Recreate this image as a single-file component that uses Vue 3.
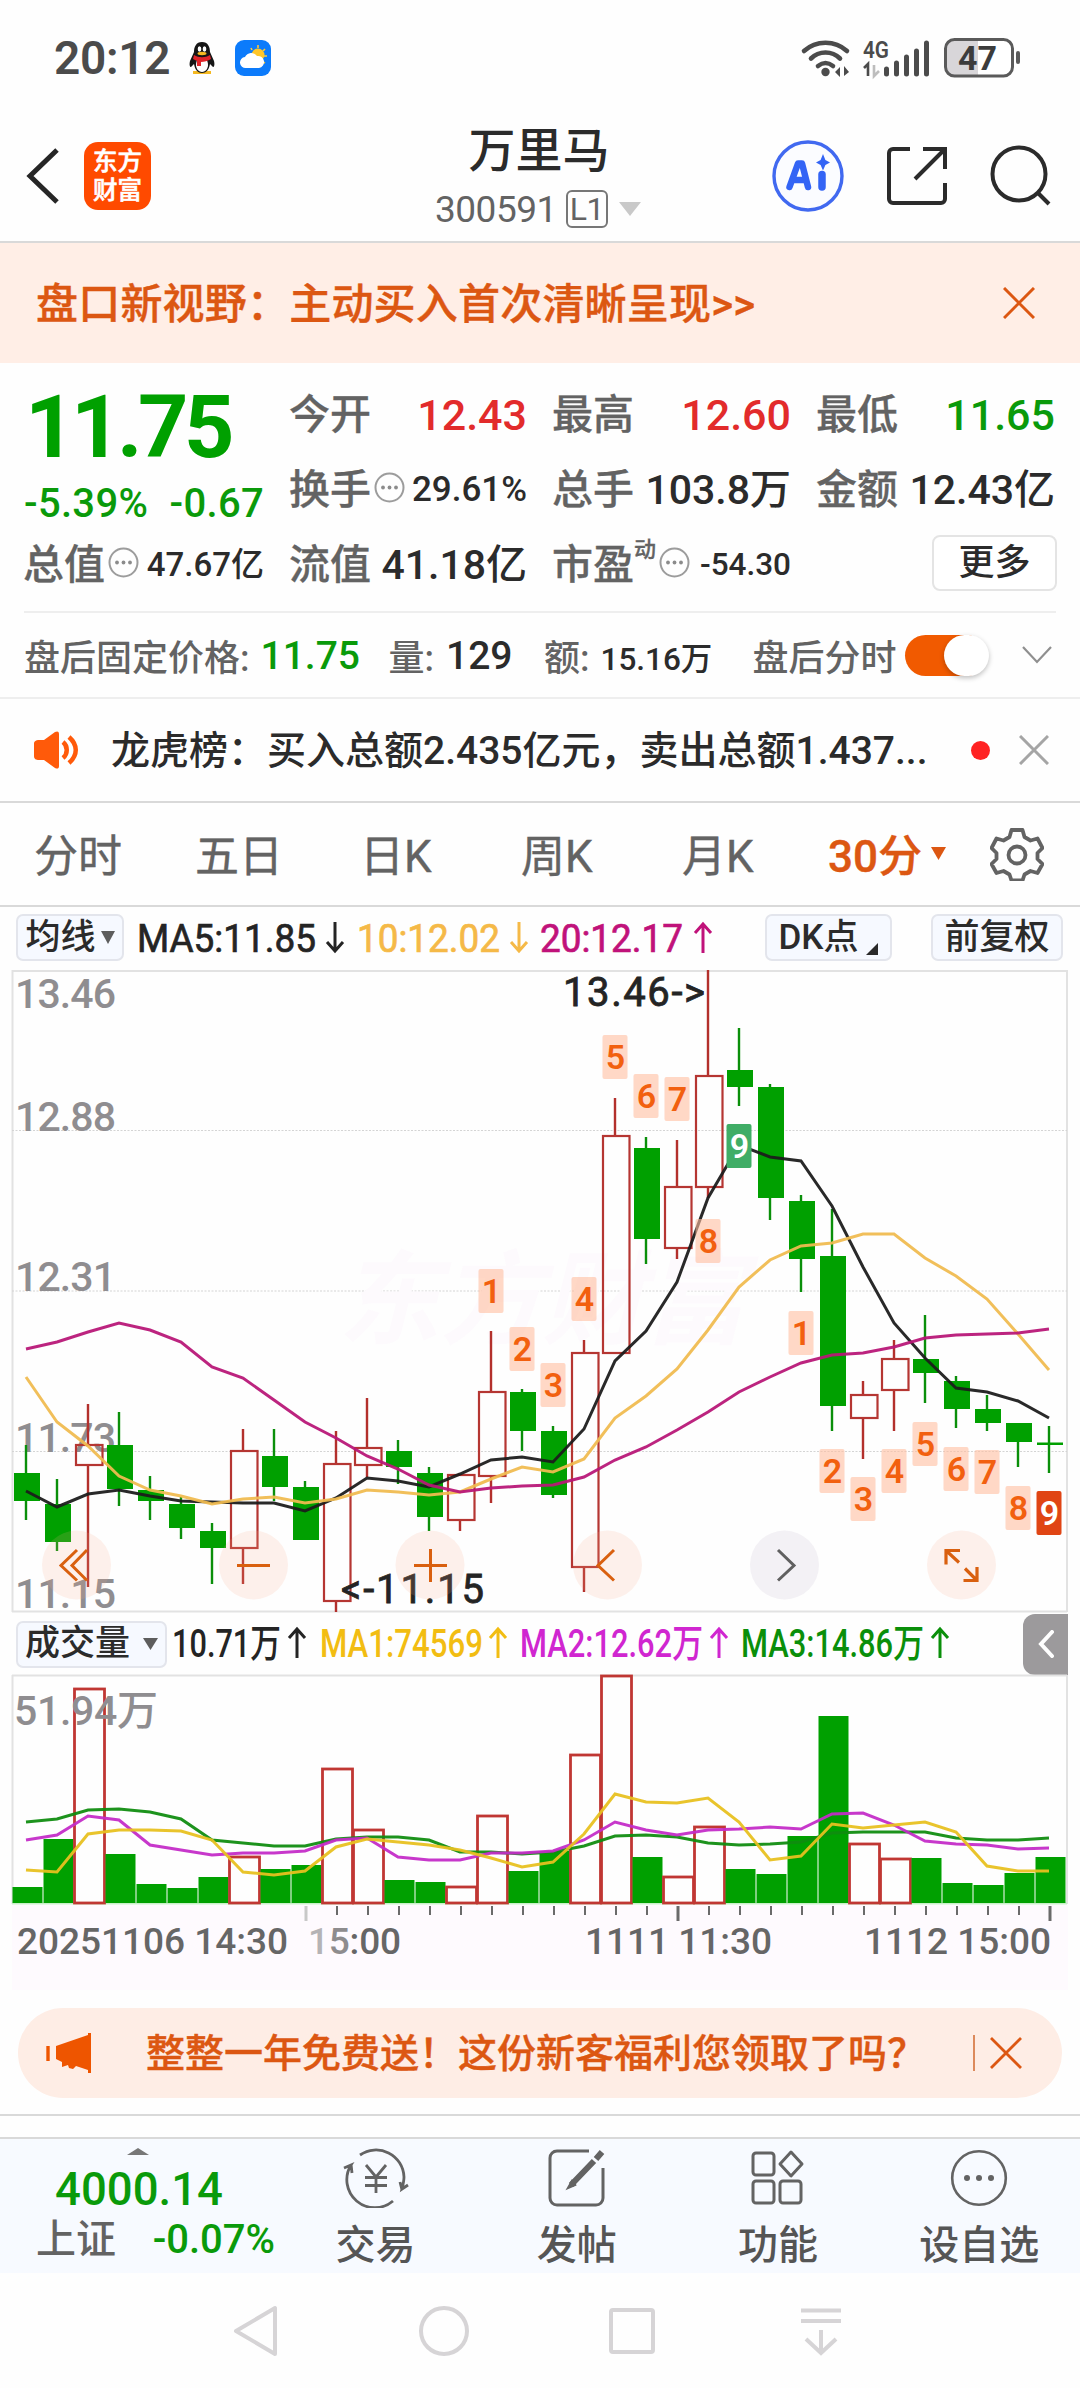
<template>
  <div class="page">
    <!-- 系统状态栏 -->
    <div class="status">
      <span class="status__time">20:12</span>
      <svg class="status__qq" width="28" height="34" viewBox="0 0 28 34">
        <path d="M5 30h18v3H5z" fill="#f5b921" />
        <path d="M14 1c-6 0-8 5-8 10l-4 9c-1 4 0 6 1 6l3-3c1 6 4 9 8 9s7-3 8-9l3 3c1 0 2-2 1-6l-4-9c0-5-2-10-8-10z" fill="#161616" />
        <path d="M14 17c-5 0-6 4-6 7s2 7 6 7 6-4 6-7-1-7-6-7z" fill="#fff" />
        <path d="M6 14c5 3 11 3 16 0l1 4c-3 2-7 3-10 3v4H9v-5l-4-2z" fill="#e0242a" />
        <ellipse cx="11.5" cy="8" rx="1.8" ry="2.8" fill="#fff" />
        <ellipse cx="16.5" cy="8" rx="1.8" ry="2.8" fill="#fff" />
        <ellipse cx="14" cy="12.5" rx="4.5" ry="1.7" fill="#f5b921" />
      </svg>
      <svg class="status__weather" width="36" height="36" viewBox="0 0 36 36">
        <rect width="36" height="36" rx="9" fill="#0c7bfb" />
        <path d="M23 5v3M30 9l-2 2M32 16h-3M16 8l1 2M30 23l-2-1" stroke="#ffc933" stroke-width="1.6" />
        <circle cx="23" cy="15" r="6.5" fill="#ffc628" />
        <path d="M11 28a5.500 5.500 0 0 1-1-11 7 7 0 0 1 12-1 6 6 0 0 1 2 12z" fill="#fff" />
      </svg>
      <svg class="status__right" width="222" height="44" viewBox="800 35 222 44">
        <g fill="none" stroke="#4b4b4b" stroke-width="4.600" stroke-linecap="round">
          <path d="M804 50c12-11 31-11 43 0" />
          <path d="M811 57.500c8-8 21-8 29 0" />
          <path d="M818 65c5-4 10-4 15 0" />
        </g>
        <circle cx="825.500" cy="71" r="4.200" fill="#4b4b4b" />
        <path d="M835 71l5-5v10zM849 71l-5-6v10z" fill="#4b4b4b" />
        <text x="863" y="57" textLength="26" lengthAdjust="spacingAndGlyphs" font-size="24" font-weight="600" fill="#4b4b4b">4G</text>
        <path d="M864 67l4-4v12" stroke="#4b4b4b" stroke-width="2.600" fill="none" />
        <path d="M874 64v11l5-5" stroke="#bdbdbd" stroke-width="2.600" fill="none" />
        <path d="M886.500 68v5M896.500 62v11M906.500 56v17M916.500 50v23M926.500 42v31" stroke="#4b4b4b" stroke-width="5" stroke-linecap="round" />
        <rect x="945.500" y="38.500" width="67" height="36.500" rx="9" fill="#fff" />
        <path d="M954.500 39H978v36h-23.500a9 9 0 0 1-9-9V48a9 9 0 0 1 9-9z" fill="#d8d6d9" />
        <rect x="945.500" y="38.500" width="67" height="36.500" rx="9" fill="none" stroke="#5a5a5a" stroke-width="3" />
        <path d="M1018 52v9" stroke="#5a5a5a" stroke-width="4" stroke-linecap="round" />
        <text x="958" y="68.500" textLength="39" lengthAdjust="spacingAndGlyphs" font-size="34" font-weight="700" fill="#3c3c3c">47</text>
      </svg>
    </div>

    <!-- 顶部导航 -->
    <header class="header">
      <div class="header__side">
        <svg width="34" height="56" viewBox="0 0 34 56"><path d="M31 2L4 28l27 26" fill="none" stroke="#262626" stroke-width="5" /></svg>
        <div class="logo"><span>东方</span><span>财富</span></div>
      </div>
      <div class="header__center">
        <div class="header__name">万里马</div>
        <div class="header__code">
          <span>300591</span><span class="level">L1</span>
          <svg width="22" height="14" viewBox="0 0 22 14"><path d="M0 0h22L11 14z" fill="#c9c9c9" /></svg>
        </div>
      </div>
      <div class="header__side header__side--right">
        <svg width="72" height="72" viewBox="0 0 72 72">
          <circle cx="36" cy="36" r="34" fill="#fbfcff" stroke="#4169f0" stroke-width="3.400" />
          <path d="M17.500 47L26 23.500h4L36 47M21 40h13" fill="none" stroke="#3364f5" stroke-width="6.500" stroke-linecap="round" stroke-linejoin="round" />
          <path d="M50 34.500V47" stroke="#3364f5" stroke-width="7.500" stroke-linecap="round" />
          <path d="M51 14l2.400 6 4.600 2.500-4.600 2.500-2.400 5.500-2.400-5.500-4.600-2.500 4.600-2.500z" fill="#3364f5" />
        </svg>
        <svg width="60" height="60" viewBox="0 0 60 60" fill="none" stroke="#2b2b2b" stroke-width="4">
          <path d="M23 3H6a4 4 0 0 0-4 4v46a4 4 0 0 0 4 4h48a4 4 0 0 0 4-4V37" />
          <path d="M36 3h22v20M57 4L28 33" />
        </svg>
        <svg width="62" height="62" viewBox="0 0 62 62" fill="none" stroke="#2b2b2b" stroke-width="4">
          <circle cx="29" cy="29" r="26.500" /><path d="M48 48l11 11" />
        </svg>
      </div>
    </header>

    <div class="banner">
      <span class="banner__text">盘口新视野：主动买入首次清晰呈现&gt;&gt;</span>
      <svg width="32" height="32" viewBox="0 0 32 32"><path d="M1 1l30 30M31 1L1 31" stroke="#dc5712" stroke-width="3" /></svg>
    </div>

    <!-- 行情 -->
    <section class="quote">
      <div class="price">
        <div class="price__now">11.75</div>
        <div class="price__diff"><span>-5.39%</span><span>-0.67</span></div>
      </div>
      <div v-for="q in quotes" :key="q.label" class="cell">
        <span class="cell__label">{{ q.label }}<sup v-if="q.sup">{{ q.sup }}</sup></span>
        <svg v-if="q.tip" class="cell__tip" width="31" height="31" viewBox="0 0 31 31">
          <circle cx="15.500" cy="15.500" r="14" fill="none" stroke="#9c9c9c" stroke-width="2" />
          <circle cx="9" cy="15.500" r="1.900" fill="#8b8b8b" /><circle cx="15.500" cy="15.500" r="1.900" fill="#8b8b8b" /><circle cx="22" cy="15.500" r="1.900" fill="#8b8b8b" />
        </svg>
        <span class="cell__value" :class="[q.color, q.size]">{{ q.value }}</span>
      </div>
      <div class="cell cell--more"><button class="more">更多</button></div>
    </section>

    <div class="after">
      <span class="after__label">盘后固定价格:</span><b class="green after__price">11.75</b>
      <span class="after__label">量:</span><b class="after__num">129</b>
      <span class="after__label">额:</span><b class="after__small">15.16万</b>
      <span class="after__label">盘后分时</span>
      <span class="switch"><i></i></span>
      <svg class="after__arrow" width="30" height="18" viewBox="0 0 30 18"><path d="M1 1l14 15L29 1" fill="none" stroke="#8f8f8f" stroke-width="2.200" /></svg>
    </div>

    <div class="news">
      <svg width="46" height="38" viewBox="0 0 46 38">
        <path d="M1 13c0-3 2-4 5-4h5L22 1c2-1 4-1 4 2v32c0 3-2 3-4 2l-11-8H6c-3 0-5-1-5-4z" fill="#ff5a0a" />
        <path d="M30 11c5 4 5 12 0 16M36 6c9 8 9 18 0 26" fill="none" stroke="#ff5a0a" stroke-width="4.500" />
      </svg>
      <span class="news__text">龙虎榜：买入总额2.435亿元，卖出总额1.437...</span>
      <i class="news__dot"></i>
      <svg width="30" height="30" viewBox="0 0 30 30"><path d="M1 1l28 28M29 1L1 29" stroke="#a5a5a5" stroke-width="3" /></svg>
    </div>

    <nav class="tabs">
      <span v-for="t in tabs" :key="t" class="tabs__item">{{ t }}</span>
      <span class="tabs__item tabs__item--active">30分<svg width="15" height="13" viewBox="0 0 15 13"><path d="M0 0h15L7.500 13z" fill="#dc5712" /></svg></span>
      <svg class="tabs__gear" width="54" height="54" viewBox="0 0 54 54" fill="none" stroke="#636363" stroke-width="3.800" stroke-linejoin="round">
        <path d="M21.500 3h11l2 7 6 3.500 7-2 5 9.500-5 5v6l5 5-5 9-7-2-6 3.500-2 6h-11l-2-6-6-3.500-7 2-5-9 5-5v-6l-5-5 5-9.500 7 2 6-3.500z" />
        <circle cx="27" cy="28" r="8.500" />
      </svg>
    </nav>

    <!-- K线 -->
    <div class="legend">
      <button class="chip chip--avg">均线<svg width="14" height="13" viewBox="0 0 14 13"><path d="M0 0h14L7 13z" fill="#5d5d5d" /></svg></button>
      <svg class="legend__values" width="600" height="50" viewBox="130 0 600 50">
        <g v-for="m in maLegend" :key="m.text" :fill="m.color" :stroke="m.color">
          <text :x="m.x" y="39" :textLength="m.w" lengthAdjust="spacingAndGlyphs" font-size="38" stroke-width="0.7">{{ m.text }}</text>
          <path :d="arrow(m.ax, 9, m.up)" fill="none" stroke-width="3" />
        </g>
      </svg>
      <button class="chip chip--dk">DK点<svg width="12" height="12" viewBox="0 0 12 12"><path d="M12 0v12H0z" fill="#2a2a2a" /></svg></button>
      <button class="chip chip--right">前复权</button>
    </div>

    <svg class="chart" width="1080" height="646" viewBox="0 968 1080 646">
      <path d="M12 971H1067M12 1611.500H1067M12.500 970V1612M1067 970V1612" stroke="#e2e2e2" stroke-width="2" fill="none" />
      <path d="M12 1130.500H1067M12 1291H1067M12 1451.500H1067" stroke="#d4d4d4" stroke-width="1" stroke-dasharray="2 1.500" />
      <text class="watermark" x="338" y="1336" textLength="408">东方财富</text>
      <g class="axis">
        <text v-for="l in priceAxis" :key="l[0]" x="15" :y="l[1]" textLength="101">{{ l[0] }}</text>
      </g>
      <g v-for="(c, i) in candles" :key="i">
        <template v-if="c[4]">
          <path :d="`M${cx(i)} ${c[0]}V${c[1]}M${cx(i)} ${c[2]}V${c[3]}`" stroke="#b3302c" stroke-width="2.400" />
          <rect :x="cx(i) - 12" :y="c[1] + 1" width="26.500" :height="c[2] - c[1]" fill="none" stroke="#b53632" stroke-width="2.200" />
        </template>
        <template v-else>
          <path :d="`M${cx(i)} ${c[0]}V${c[3]}`" stroke="#0a8f0a" stroke-width="2.400" />
          <rect :x="cx(i) - 12" :y="c[1]" width="26" :height="c[2] - c[1]" fill="#00a000" />
        </template>
      </g>
      <polyline v-for="l in priceLines" :key="l.color" :points="points(l.ys)" fill="none" :stroke="l.color" stroke-width="3" stroke-opacity=".94" />
      <g v-for="b in badges" :key="b[0] + '-' + b[1]">
        <rect :x="cx(b[0]) - 12.500" :y="b[2]" width="25" height="44" rx="2" :fill="badgeFill(b[3])" />
        <text :x="cx(b[0]) + 0.500" :y="b[2] + 34" class="badge" :fill="b[3] ? '#fff' : '#f2600f'">{{ b[1] }}</text>
      </g>
      <text x="563" y="1006" textLength="142" class="mark">13.46-&gt;</text>
      <text x="341" y="1603" textLength="143" class="mark">&lt;-11.15</text>
      <g fill="#f7a88a" fill-opacity=".16">
        <circle v-for="x in [76.5, 253.5, 430, 607.5, 961.5]" :key="x" :cx="x" cy="1565" r="34.500" />
        <circle cx="784.500" cy="1565" r="34.500" fill="#d8cfe0" fill-opacity=".28" />
      </g>
      <g fill="none" stroke="#d9600f" stroke-width="3">
        <path d="M77 1550l-16 15.500 16 15M87 1550l-15 15.500 15 15M237 1565.500h33M414 1565.500h33M430.500 1549v33M614 1550l-16 15.500 16 15" />
        <path d="M778 1550l16 15.500-16 15" stroke="#606060" />
        <path d="M960 1550.500h-14v14M946 1550.500l13 12M963.500 1580.500H977V1567M977 1580.500l-12-12" stroke-width="3.200" />
      </g>
    </svg>

    <!-- 成交量 -->
    <div class="legend legend--vol">
      <button class="chip chip--vol">成交量<svg width="15" height="12" viewBox="0 0 15 12"><path d="M0 0h15L7.500 12z" fill="#5d5d5d" /></svg></button>
      <svg class="legend__values" width="800" height="50" viewBox="170 0 800 50">
        <g v-for="m in volLegend" :key="m.text" :fill="m.color" :stroke="m.color">
          <text :x="m.x" y="38" :textLength="m.w" lengthAdjust="spacingAndGlyphs" font-size="39" stroke="none">{{ m.text }}</text>
          <path :d="arrow(m.ax, 8, m.up)" fill="none" stroke-width="3" />
        </g>
      </svg>
      <button class="fold"><svg width="16" height="28" viewBox="0 0 16 28"><path d="M14 2L3 14l11 12" fill="none" stroke="#fff" stroke-width="4" stroke-linecap="round" /></svg></button>
    </div>

    <svg class="chart" width="1080" height="318" viewBox="0 1674 1080 318">
      <rect x="12" y="1905" width="1056" height="85" fill="#fefafe" />
      <path d="M12 1675.500H1067M12.500 1675V1904M1067 1675V1904" stroke="#e2e2e2" stroke-width="2" fill="none" />
      <path d="M12 1903.500H1067" stroke="#c9f0c9" stroke-width="2" />
      <g v-for="(v, i) in volumes" :key="i">
        <rect v-if="candles[i][4]" :x="74.500 + 31 * (i - 2)" :y="v + 1" width="30" :height="1902 - v" fill="none" stroke="#c03733" stroke-width="2.800" />
        <rect v-else :x="12.500 + 31 * i" :y="v" width="30" :height="1903 - v" fill="#00a000" />
      </g>
      <polyline v-for="l in volLines" :key="l.color" :points="points(l.ys)" fill="none" :stroke="l.color" stroke-width="3" stroke-opacity=".94" />
      <text x="14" y="1725" textLength="144" class="axis">51.94万</text>
      <path v-for="i in 25" :key="i" :d="`M${cx(i + 8) + 1} 1906v${isMajor(i + 8) ? 15 : 9}`" :stroke="i === 1 ? '#c8c8c8' : '#6a6a6a'" :stroke-width="isMajor(i + 8) ? 3 : 2" />
      <g class="dates">
        <text x="17" y="1954" textLength="271">20251106 14:30</text>
        <text x="308" y="1954" textLength="93"><tspan fill="#b5b3b5">1</tspan><tspan fill="#8e8c8e">5</tspan>:00</text>
        <text x="585" y="1954" textLength="187">1111 11:30</text>
        <text x="864" y="1954" textLength="187">1112 15:00</text>
      </g>
    </svg>

    <div class="promo">
      <svg width="48" height="42" viewBox="0 0 48 42">
        <path d="M2 14v15" stroke="#ee5500" stroke-width="3.400" />
        <path d="M10 14L42 3V1h3v40h-3v-3l-12-4-3 3-4-1-1-3-6 2v-5l-6-3z" fill="#ee5500" />
      </svg>
      <span class="promo__text">整整一年免费送！这份新客福利您领取了吗？</span>
      <i class="promo__line"></i>
      <svg width="32" height="32" viewBox="0 0 32 32"><path d="M1 1l30 30M31 1L1 31" stroke="#dc5712" stroke-width="2.800" /></svg>
    </div>
    <div class="gap"></div>

    <!-- 底部工具栏 -->
    <footer class="toolbar">
      <div class="index">
        <svg width="22" height="7" viewBox="0 0 22 7"><path d="M0 7h22L11 0z" fill="#777" /></svg>
        <div class="index__value">4000.14</div>
        <div class="index__row"><span>上证</span><b>-0.07%</b></div>
      </div>
      <div class="tool">
        <svg width="66" height="60" viewBox="0 0 66 60" fill="none" stroke="#636363" stroke-width="2.800">
          <path d="M17 7a28 28 0 0 1 44 22c0 4-1 8-2 12l6-4M59 42l-2-8" />
          <path d="M50 53A28 28 0 0 1 8 17L1 20M8 16l1 9" />
          <path d="M23 17l10 12 10-12M22 29.500h22M22 37.500h22M33 29v16" />
        </svg>
        <span>交易</span>
      </div>
      <div class="tool">
        <svg width="58" height="60" viewBox="0 0 58 60" fill="none" stroke="#636363" stroke-width="3">
          <path d="M41 3H9a7 7 0 0 0-7 7v40a7 7 0 0 0 7 7h39a7 7 0 0 0 7-7V20" />
          <path d="M54 4L48 11M46 13L23 37" stroke-width="6" />
          <path d="M25 32l-4 7 7-3" stroke-width="3" />
        </svg>
        <span>发帖</span>
      </div>
      <div class="tool">
        <svg width="56" height="60" viewBox="0 0 56 60" fill="none" stroke="#636363" stroke-width="3">
          <rect x="3" y="5" width="21" height="22" rx="3" /><path d="M41 4l11 12-11 12-11-12z" stroke-linejoin="round" />
          <rect x="3" y="33" width="21" height="22" rx="3" /><rect x="30" y="33" width="21" height="22" rx="3" />
        </svg>
        <span>功能</span>
      </div>
      <div class="tool">
        <svg width="58" height="60" viewBox="0 0 58 60">
          <circle cx="29" cy="30" r="26.800" fill="none" stroke="#636363" stroke-width="2.600" />
          <circle cx="17" cy="30" r="3" fill="#636363" /><circle cx="29" cy="30" r="3" fill="#636363" /><circle cx="41" cy="30" r="3" fill="#636363" />
        </svg>
        <span>设自选</span>
      </div>
    </footer>

    <svg class="sysnav" width="1080" height="115" viewBox="0 2273 1080 115" fill="none" stroke="#d6d4d6" stroke-width="4">
      <path d="M275 2308v46l-39-23z" stroke-linejoin="round" />
      <circle cx="444" cy="2331" r="23" />
      <rect x="611" y="2310" width="42" height="42" rx="2" />
      <path d="M801 2310.500h40M801 2321h40M821 2330v21M806 2339l15 14 15-14" />
    </svg>
  </div>
</template>

<script setup>
const quotes = [
  { label: '今开', value: '12.43', color: 'red', size: 'plain' },
  { label: '最高', value: '12.60', color: 'red', size: 'plain' },
  { label: '最低', value: '11.65', color: 'green', size: 'plain' },
  { label: '换手', value: '29.61%', tip: true, size: 'mid' },
  { label: '总手', value: '103.8万' },
  { label: '金额', value: '12.43亿' },
  { label: '总值', value: '47.67亿', tip: true, size: 'small' },
  { label: '流值', value: '41.18亿' },
  { label: '市盈', value: '-54.30', tip: true, sup: '动', size: 'tiny' }
]

const tabs = ['分时', '五日', '日K', '周K', '月K']

const maLegend = [
  { text: 'MA5:11.85', x: 137, w: 179, ax: 335, color: '#242424' },
  { text: '10:12.02', x: 357, w: 143, ax: 519, color: '#f5b947' },
  { text: '20:12.17', x: 540, w: 143, ax: 703, up: true, color: '#c0127a' }
]

const volLegend = [
  { text: '10.71万', x: 172, w: 109, ax: 297, up: true, color: '#242424' },
  { text: 'MA1:74569', x: 320, w: 163, ax: 498, up: true, color: '#f2bd12' },
  { text: 'MA2:12.62万', x: 520, w: 183, ax: 719, up: true, color: '#d026d0' },
  { text: 'MA3:14.86万', x: 741, w: 183, ax: 940, up: true, color: '#0a8f0a' }
]

const priceAxis = [['13.46', 1008], ['12.88', 1131], ['12.31', 1291], ['11.73', 1452], ['11.15', 1608]]

// [最高, 实体上沿, 实体下沿, 最低, 是否阳线]
const candles = [
  [1445, 1473, 1501, 1520], [1479, 1504, 1542, 1551], [1404, 1444, 1464, 1587, 1],
  [1412, 1445, 1489, 1506], [1476, 1490, 1501, 1520], [1497, 1504, 1528, 1539],
  [1523, 1531, 1548, 1584], [1429, 1450, 1547, 1584, 1], [1429, 1456, 1487, 1501],
  [1481, 1487, 1540, 1540], [1431, 1463, 1600, 1612, 1], [1398, 1447, 1464, 1477, 1],
  [1440, 1451, 1467, 1484], [1467, 1473, 1517, 1531], [1475, 1474, 1519, 1531, 1],
  [1331, 1391, 1475, 1503, 1], [1389, 1392, 1431, 1451], [1426, 1431, 1495, 1498],
  [1340, 1352, 1566, 1592, 1], [1098, 1135, 1352, 1353, 1], [1137, 1148, 1239, 1264],
  [1140, 1186, 1247, 1259, 1], [970, 1075, 1186, 1198, 1], [1028, 1070, 1087, 1106],
  [1084, 1087, 1198, 1220], [1195, 1201, 1259, 1292], [1209, 1256, 1406, 1431],
  [1381, 1394, 1417, 1459, 1], [1340, 1358, 1389, 1431, 1], [1315, 1359, 1373, 1403],
  [1376, 1381, 1409, 1428], [1395, 1409, 1423, 1431], [1423, 1423, 1442, 1467],
  [1426, 1442.5, 1445, 1473]
]

const priceLines = [
  { color: '#1c1c1c', ys: [1491, 1507, 1494, 1490, 1496, 1501, 1502, 1503, 1503, 1511, 1498, 1478, 1481, 1487, 1474, 1460, 1457, 1462, 1429, 1361, 1331, 1282, 1198, 1145, 1157, 1161, 1206, 1267, 1323, 1358, 1388, 1392, 1401, 1418] },
  { color: '#f0bb50', ys: [1377, 1422, 1446, 1476, 1490, 1496, 1504, 1499, 1497, 1503, 1499, 1490, 1492, 1495, 1492, 1479, 1467, 1472, 1459, 1418, 1396, 1369, 1330, 1287, 1260, 1246, 1243, 1234, 1234, 1258, 1276, 1299, 1334, 1370] },
  { color: '#b81677', ys: [1349, 1342, 1332, 1323, 1330, 1342, 1367, 1378, 1400, 1422, 1438, 1456, 1469, 1485, 1492, 1488, 1486, 1485, 1477, 1460, 1447, 1430, 1412, 1392, 1377, 1363, 1355, 1353, 1347, 1338, 1335, 1334, 1333, 1329] }
]

// 九转序列 [K线序号, 数字, 顶部y, 样式]
const badges = [
  [15, 1, 1269], [16, 2, 1327], [17, 3, 1363], [18, 4, 1277], [19, 5, 1035],
  [20, 6, 1074], [21, 7, 1077], [22, 8, 1219], [23, 9, 1124, 'sell'],
  [25, 1, 1311], [26, 2, 1449], [27, 3, 1477], [28, 4, 1449], [29, 5, 1422],
  [30, 6, 1447], [31, 7, 1450], [32, 8, 1486], [33, 9, 1491, 'buy']
]

const volumes = [
  1887, 1839, 1688, 1854, 1884, 1888, 1877, 1856, 1869, 1865, 1768, 1829, 1880, 1882, 1886, 1815, 1871,
  1851, 1754, 1675, 1857, 1876, 1826, 1869, 1874, 1836, 1716, 1843, 1858, 1858, 1883, 1885, 1873, 1857
]

const volLines = [
  { color: '#0f8c0f', ys: [1822, 1819, 1810, 1809, 1812, 1819, 1840, 1843, 1846, 1846, 1839, 1837, 1837, 1840, 1852, 1852, 1854, 1852, 1846, 1836, 1835, 1837, 1843, 1845, 1844, 1842, 1833, 1832, 1832, 1832, 1838, 1840, 1840, 1838] },
  { color: '#c42cc8', ys: [1840, 1835, 1816, 1820, 1845, 1850, 1855, 1853, 1853, 1851, 1840, 1838, 1857, 1860, 1860, 1853, 1853, 1851, 1840, 1822, 1830, 1835, 1830, 1829, 1827, 1829, 1814, 1813, 1825, 1841, 1844, 1845, 1849, 1848] },
  { color: '#e8c01f', ys: [1870, 1872, 1834, 1830, 1830, 1831, 1840, 1872, 1875, 1871, 1847, 1839, 1842, 1845, 1850, 1858, 1867, 1862, 1834, 1794, 1802, 1803, 1798, 1822, 1860, 1856, 1824, 1828, 1825, 1822, 1832, 1866, 1871, 1871] }
]

const cx = (i) => 26 + 31 * i
const points = (ys) => ys.map((y, i) => `${cx(i)},${y}`).join(' ')
const isMajor = (i) => i === 9 || i === 21 || i === 33

const badgeFill = (type) => {
  if (type === 'sell') return '#40ad66'
  if (type === 'buy') return '#e04514'
  return 'rgba(255, 190, 160, 0.6)'
}

const arrow = (x, y, up) =>
  up
    ? `M${x} ${y + 31}V${y + 2}M${x - 8} ${y + 11}l8-9 8 9`
    : `M${x} ${y}V${y + 29}M${x - 8} ${y + 20}l8 9 8-9`
</script>

<style>
body {
  margin: 0;
  background: #fefefe;
}
</style>

<style scoped>
.page {
  width: 1080px;
  height: 2388px;
  overflow: hidden;
  background: #fefefe;
  color: #2b2b2b;
  font-family: Roboto, 'Noto Sans CJK SC', sans-serif;
  font-weight: 500;
}
.page svg {
  display: block;
  flex: none;
}
.page button {
  font: inherit;
  color: inherit;
  padding: 0;
}
.red { color: #e22b2b; }
.green { color: #0a9a0a; }

.status {
  height: 118px;
  display: flex;
  align-items: center;
  box-sizing: border-box;
  padding: 0 58px 2px 54px;
}
.status__time {
  width: 134px;
  font-size: 46px;
  font-weight: 600;
  letter-spacing: -0.3px;
  color: #4b4b4b;
}
.status__weather { margin-left: 19px; }
.status__right { margin-left: auto; }

.header {
  height: 125px;
  display: flex;
  box-sizing: border-box;
  border-bottom: 2px solid #d9d9d9;
}
.header__side {
  width: 360px;
  height: 115px;
  display: flex;
  align-items: center;
  gap: 24px;
  padding-left: 26px;
  box-sizing: border-box;
}
.header__side--right {
  justify-content: flex-end;
  gap: 43px;
  padding: 0 28px 0 0;
}
.logo {
  width: 67px;
  height: 68px;
  border-radius: 14px;
  background: #ff4a00;
  color: #fff;
  display: flex;
  flex-direction: column;
  align-items: center;
  justify-content: center;
  font-size: 24.5px;
  line-height: 29px;
  -webkit-text-stroke: 0.6px;
}
.header__center {
  width: 360px;
  padding-right: 2px;
  box-sizing: border-box;
  text-align: center;
}
.header__name {
  margin-top: 4px;
  font-size: 47px;
  line-height: 58px;
}
.header__code {
  height: 40px;
  margin-top: 9px;
  display: flex;
  align-items: center;
  padding-left: 75px;
  font-size: 37px;
  font-weight: 400;
  letter-spacing: -0.5px;
  color: #636363;
}
.level {
  width: 38px;
  height: 34px;
  margin: 0 11px 0 9px;
  line-height: 35px;
  font-size: 32px;
  border: 2px solid #777;
  border-radius: 6px;
}

.banner {
  height: 120px;
  display: flex;
  align-items: center;
  justify-content: space-between;
  box-sizing: border-box;
  padding: 0 45px 0 36px;
  background: #ffeee6;
  color: #dc5712;
  font-size: 42px;
}
.banner__text {
  margin-top: -5px;
  letter-spacing: 0.2px;
  -webkit-text-stroke: 0.4px;
}

.quote {
  height: 250px;
  box-sizing: border-box;
  margin: 0 24px;
  padding-top: 14px;
  border-bottom: 2px solid #eee;
  display: grid;
  grid-template-columns: 240px 237px 238px 238px;
  grid-template-rows: repeat(3, 75px);
  column-gap: 26px;
}
.price {
  grid-row: 1 / 3;
  color: #0a9a0a;
}
.price__now {
  margin: 8px 0 0 1px;
  height: 84px;
  line-height: 84px;
  font-size: 88px;
  font-weight: 700;
  letter-spacing: -4.5px;
  color: #00a000;
}
.price__diff {
  display: flex;
  justify-content: space-between;
  line-height: 69px;
  font-size: 40px;
  letter-spacing: 0.3px;
}
.cell {
  display: flex;
  align-items: center;
  font-size: 41px;
  line-height: 60px;
}
.cell__label {
  position: relative;
  margin-left: -1px;
  color: #636363;
  -webkit-text-stroke: 0.3px;
}
.cell__label sup {
  font-size: 22px;
  line-height: 22px;
  vertical-align: 22px;
}
.cell__tip { margin: -5px 0 0 3px; }
.cell__value { margin-left: auto; }
.cell__value.plain { font-size: 43px; }
.cell__value.mid { font-size: 35px; }
.cell__value.small { font-size: 33px; }
.cell__value.tiny { font-size: 31.5px; }
.cell--more { justify-content: flex-end; }
.more {
  width: 125px;
  height: 56px;
  margin: -4px -2px 0 0;
  background: #fff;
  border: 2px solid #e4e4e4;
  border-radius: 8px;
  font-size: 36px !important;
  line-height: 50px !important;
}

.after {
  height: 86px;
  box-sizing: border-box;
  border-bottom: 2px solid #eee;
  display: flex;
  align-items: center;
  padding-left: 24px;
}
.after b {
  margin-top: 2px;
  font-weight: 500;
}
.after__label {
  font-size: 36px;
  color: #636363;
  white-space: nowrap;
}
.after__price { width: 128px; margin-left: 11px; font-size: 39px; }
.after__num { width: 98px; margin-left: 12px; font-size: 39px; }
.after__small { width: 152px; margin-left: 11px; font-size: 31.5px; }
.switch {
  width: 82px;
  height: 41px;
  margin-left: 8px;
  border-radius: 21px;
  background: #f15a00;
  display: flex;
  justify-content: flex-end;
}
.switch i {
  width: 45px;
  height: 41px;
  margin-right: -2px;
  border-radius: 21px;
  background: #fff;
  box-shadow: 0 2px 5px rgba(0, 0, 0, 0.25);
}
.after__arrow {
  margin-left: auto;
  margin-right: 28px;
}

.news {
  height: 104px;
  box-sizing: border-box;
  border-bottom: 2px solid #d9d9d9;
  display: flex;
  align-items: center;
  padding: 0 31px 0 33px;
  font-size: 39px;
}
.news__text {
  margin: -6px 0 0 32px;
  width: 860px;
  white-space: nowrap;
}
.news__dot {
  width: 19px;
  height: 19px;
  margin-right: 29px;
  border-radius: 50%;
  background: #f22;
}

.tabs {
  height: 104px;
  box-sizing: border-box;
  border-bottom: 2px solid #d9d9d9;
  display: flex;
  align-items: center;
  padding: 0 36px 0 34px;
  font-size: 44px;
  color: #636363;
}
.tabs__item {
  width: 161px;
  margin-top: -2px;
  font-weight: 400;
  white-space: nowrap;
  -webkit-text-stroke: 0.4px;
}
.tabs__item:nth-child(2) { width: 165px; }
.tabs__item:nth-child(5) { width: 146px; }
.tabs__item--active {
  width: auto;
  display: flex;
  align-items: center;
  gap: 9px;
  color: #dc5712;
  font-weight: 500;
}
.tabs__gear { margin-left: auto; }

.legend {
  height: 61px;
  display: flex;
  align-items: center;
  padding-left: 16px;
}
.chip {
  height: 47px;
  box-sizing: border-box;
  display: flex;
  align-items: center;
  justify-content: center;
  background: #f6f9ff;
  border: 2px solid #e3e5ec;
  border-radius: 7px;
  font-size: 35px !important;
  line-height: 40px !important;
  white-space: nowrap;
}
.chip--avg { width: 108px; gap: 5px; }
.chip--dk { width: 127px; margin-left: 35px; gap: 8px; }
.chip--dk svg { margin-top: 22px; }
.chip--right { width: 132px; margin-left: 39px; }
.chip--vol { width: 151px; gap: 13px; }
.legend--vol { height: 60px; }
.legend__values { margin-left: 6px; font-weight: 400; }
.legend--vol .legend__values { margin-left: 3px; font-weight: 500; }
.fold {
  width: 45px;
  height: 61px;
  margin-left: auto;
  margin-right: 12px;
  border: 0;
  border-radius: 12px 0 0 12px;
  background: #9c9a9c;
  display: flex;
  align-items: center;
  justify-content: center;
}

.axis { font-size: 41px; fill: #8f8d90; }
.mark {
  font-size: 40px;
  font-weight: 400;
  fill: #242424;
  stroke: #242424;
  stroke-width: 0.8px;
}
.dates { font-size: 37px; fill: #666; }
.badge {
  font-size: 34px;
  font-weight: 600;
  text-anchor: middle;
}
.watermark {
  font-size: 102px;
  font-weight: 700;
  font-style: italic;
  fill: #fdfafd;
}

.promo {
  height: 90px;
  margin: 16px 18px 0;
  border-radius: 45px;
  background: #feede5;
  color: #dc5712;
  display: flex;
  align-items: center;
  padding-left: 28px;
  font-size: 39px;
}
.promo__text {
  width: 827px;
  margin: -6px 0 0 52px;
  white-space: nowrap;
  -webkit-text-stroke: 0.4px;
}
.promo__line {
  width: 2px;
  height: 36px;
  margin-right: 15px;
  background: #dc8a5c;
}
.gap {
  height: 21px;
  margin-top: 16px;
  border-top: 2px solid #d9d9d9;
  border-bottom: 2px solid #d9d9d9;
}

.toolbar {
  height: 134px;
  background: #f7faff;
  display: flex;
}
.index {
  width: 275px;
  display: flex;
  flex-direction: column;
  align-items: center;
  padding-top: 9px;
}
.index__value {
  margin: 8px 0 0 3px;
  line-height: 54px;
  font-size: 45.5px;
  font-weight: 500;
  color: #0a9a0a;
}
.index__row {
  align-self: stretch;
  display: flex;
  justify-content: space-between;
  align-items: center;
  margin-top: 1px;
  padding-left: 36px;
  line-height: 44px;
  font-size: 40px;
  color: #636363;
}
.index__row b {
  font-size: 40px;
  font-weight: 500;
  color: #0a9a0a;
}
.tool {
  width: 201.2px;
  display: flex;
  flex-direction: column;
  align-items: center;
  padding-top: 9px;
  font-size: 40px;
  color: #555;
}
.tool span { margin-top: 13px; line-height: 50px; }
</style>
